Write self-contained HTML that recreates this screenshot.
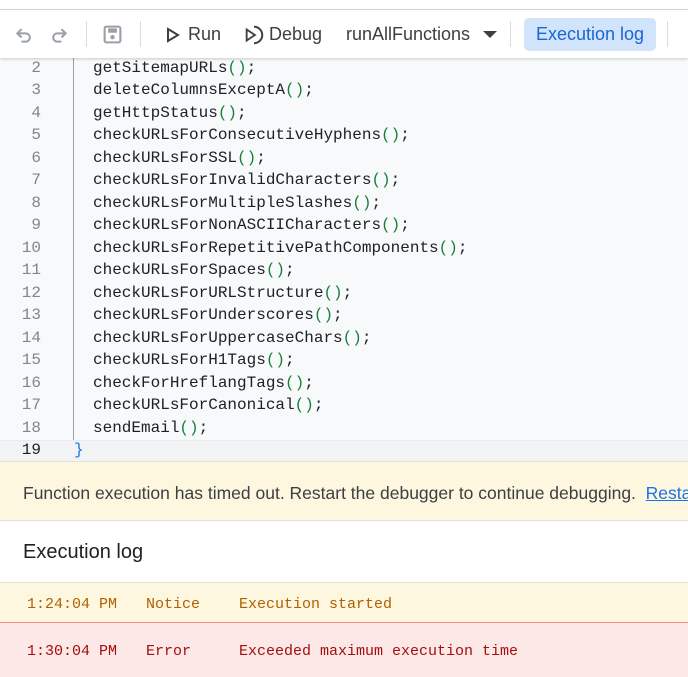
<!DOCTYPE html>
<html><head><style>
*{margin:0;padding:0;box-sizing:border-box}
body{width:688px;height:677px;overflow:hidden;background:#fff;font-family:"Liberation Sans",sans-serif;position:relative}
.top{position:absolute;top:0;left:0;width:688px;height:10px;background:#fff;border-bottom:1px solid #dadce0}
.tb{position:absolute;top:10px;left:0;width:688px;height:48px;background:#fff;box-shadow:0 1px 3px rgba(0,0,0,.2);z-index:2}
.tb .t{position:absolute;top:14px;font-size:18px;color:#3c4043}
.sep{position:absolute;top:11px;width:1px;height:26px;background:#dadce0}
.code{position:absolute;top:58px;left:0;width:688px;height:403px;background:#f8f9fa;font-family:"Liberation Mono",monospace;font-size:16px}
.ln{position:absolute;left:0;width:41px;text-align:right;color:#80868b;font-size:16px}
.cl{position:absolute;left:93px;color:#202124}
.p{color:#188038}
.gut{position:absolute;left:73px;top:0;width:1px;height:382px;background:#9aa0a6}
.ban{position:absolute;top:461px;left:0;width:688px;height:60px;background:#fef7e0;border-top:1px solid #e0e0e0;border-bottom:1px solid #e0e0e0;font-size:17.5px;color:#3c4043;padding:21px 0 0 23px;white-space:nowrap}
.ban a{color:#1a73e8;text-decoration:underline}
.hd{position:absolute;top:541px;left:23px;font-size:20px;color:#202124}
.row{position:absolute;left:0;width:688px;font-family:"Liberation Mono",monospace;font-size:15px}
.row span{position:absolute}
</style></head><body>
<div class="top"></div>
<div class="tb">
<svg style="position:absolute;left:14px;top:15px" width="20" height="20" viewBox="0 0 24 24"><path d="M9 5L4 10l5 5M4 10h10a5 5 0 010 10H9" fill="none" stroke="#9aa0a6" stroke-width="2.4"/></svg>
<svg style="position:absolute;left:49px;top:15px" width="20" height="20" viewBox="0 0 24 24"><path d="M15 5l5 5-5 5M20 10H10a5 5 0 000 10h5" fill="none" stroke="#9aa0a6" stroke-width="2.4"/></svg>
<div class="sep" style="left:86px"></div>
<svg style="position:absolute;left:102px;top:14px" width="21" height="21" viewBox="0 0 24 24"><rect x="3" y="3" width="18" height="18" rx="2" fill="none" stroke="#9aa0a6" stroke-width="2.4"/><rect x="7" y="5" width="10" height="5" fill="#9aa0a6"/><circle cx="12" cy="15" r="2.5" fill="#9aa0a6"/></svg>
<div class="sep" style="left:140px"></div>
<svg style="position:absolute;left:166px;top:17px" width="14" height="16" viewBox="0 0 14 16"><path d="M2 2l10 6-10 6z" fill="none" stroke="#3c4043" stroke-width="2"/></svg>
<div class="t" style="left:188px">Run</div>
<svg style="position:absolute;left:243px;top:14px" width="22" height="22" viewBox="0 0 24 24"><path d="M12 3a9 9 0 110 18" fill="none" stroke="#3c4043" stroke-width="2.2"/><path d="M4 6v12l9-6z" fill="none" stroke="#3c4043" stroke-width="2"/></svg>
<div class="t" style="left:269px">Debug</div>
<div class="t" style="left:346px">runAllFunctions</div>
<div style="position:absolute;left:483px;top:21px;border-left:7px solid transparent;border-right:7px solid transparent;border-top:7px solid #3c4043"></div>
<div class="sep" style="left:510px"></div>
<div style="position:absolute;left:524px;top:8px;width:132px;height:33px;background:#d2e3fc;border-radius:5px;color:#1967d2;font-size:18px;padding-top:6px;text-align:center">Execution log</div>
<div class="sep" style="left:667px"></div>
</div>
<div class="code">
<div style="position:absolute;top:382px;left:0;width:688px;height:21px;background:#f1f3f4;border-top:1px solid #e8eaed"></div>
<div class="gut"></div>
<div id="c"></div>
</div>
<script>
var L=["getSitemapURLs","deleteColumnsExceptA","getHttpStatus","checkURLsForConsecutiveHyphens","checkURLsForSSL","checkURLsForInvalidCharacters","checkURLsForMultipleSlashes","checkURLsForNonASCIICharacters","checkURLsForRepetitivePathComponents","checkURLsForSpaces","checkURLsForURLStructure","checkURLsForUnderscores","checkURLsForUppercaseChars","checkURLsForH1Tags","checkForHreflangTags","checkURLsForCanonical","sendEmail"];
var h="";
for(var i=0;i<L.length;i++){var t=1+i*22.47;h+='<div class="ln" style="top:'+t+'px">'+(i+2)+'</div><div class="cl" style="top:'+t+'px">'+L[i]+'<span class="p">()</span>;</div>';}
h+='<div class="ln" style="top:383px;color:#202124">19</div><div style="position:absolute;left:74px;top:383px;color:#1a73e8">}</div>';
document.getElementById("c").innerHTML=h;
</script>
<div class="ban">Function execution has timed out. Restart the debugger to continue debugging. &nbsp;<a>Restart</a></div>
<div class="hd">Execution log</div>
<div class="row" style="top:582px;height:41px;background:#fef7e0;border-top:1px solid #e0e0e0;border-bottom:1px solid #f28b82;color:#b06000">
<span style="left:27px;top:13px">1:24:04 PM</span><span style="left:146px;top:13px">Notice</span><span style="left:239px;top:13px">Execution started</span></div>
<div class="row" style="top:623px;height:54px;background:#fce8e6;color:#a50e0e">
<span style="left:27px;top:20px">1:30:04 PM</span><span style="left:146px;top:20px">Error</span><span style="left:239px;top:20px">Exceeded maximum execution time</span></div>
</body></html>
